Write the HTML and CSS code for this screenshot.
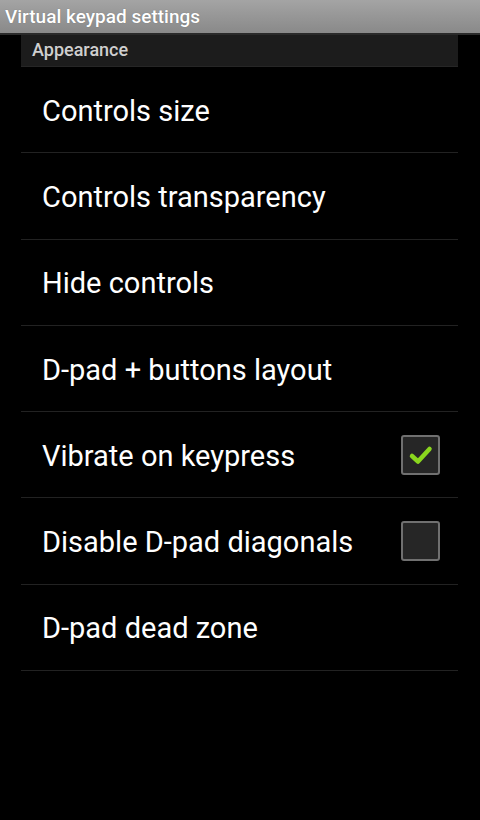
FILE: index.html
```html
<!DOCTYPE html>
<html>
<head>
<meta charset="utf-8">
<link rel="stylesheet" href="styles.css">
</head>
<body>
<div class="titlebar">Virtual keypad settings</div>
<div class="list">
  <div class="category">Appearance</div>
  <div class="item"><span class="label">Controls size</span></div>
  <div class="item"><span class="label">Controls transparency</span></div>
  <div class="item"><span class="label">Hide controls</span></div>
  <div class="item"><span class="label">D-pad + buttons layout</span></div>
  <div class="item"><span class="label">Vibrate on keypress</span>
    <span class="check">
      <svg width="30" height="30" viewBox="0 0 30 30"><path d="M6 16 L12 21.5 L23.5 9" fill="none" stroke="#8ad61e" stroke-width="4.5" stroke-linecap="round" stroke-linejoin="round"/></svg>
    </span>
  </div>
  <div class="item"><span class="label">Disable D-pad diagonals</span><span class="check"></span></div>
  <div class="item"><span class="label">D-pad dead zone</span></div>
</div>
</body>
</html>
```
FILE: styles.css
```css
html, body {
  margin: 0;
  padding: 0;
  background: #000;
  width: 480px;
  height: 820px;
  overflow: hidden;
  font-family: Roboto, "Noto Sans", sans-serif;
}
.titlebar {
  height: 35px;
  box-sizing: border-box;
  padding-left: 5px;
  background: linear-gradient(#a4a4a4, #898989);
  color: #fff;
  font-size: 19px;
  font-weight: 500;
  line-height: 33px;
  border-bottom: 2px solid #2a2a2a;
  text-shadow: 0 0 1px rgba(0,0,0,0.3);
}
.list {
  margin: 0 22px 0 21px;
}
.category {
  height: 31px;
  background: #1c1c1c;
  border-bottom: 1px solid #262626;
  color: #cfcfcf;
  font-size: 18px;
  font-weight: 500;
  line-height: 30px;
  padding-left: 11px;
}
.item {
  height: 85.3px;
  border-bottom: 1px solid #222;
  display: flex;
  align-items: center;
  justify-content: space-between;
  padding: 0 18px 0 21px;
}
.label {
  color: #fff;
  font-size: 29px;
  padding-top: 2px;
}
.check {
  width: 35px;
  height: 36px;
  border: 2px solid #707070;
  border-radius: 3px;
  background: #262626;
  display: flex;
  align-items: center;
  justify-content: center;
}
```
